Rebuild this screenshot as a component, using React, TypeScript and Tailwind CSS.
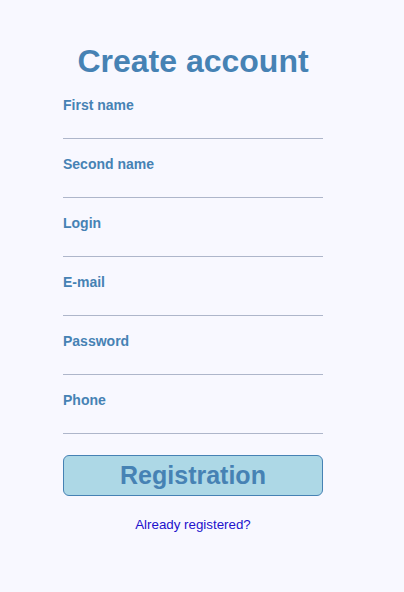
const fields = ["First name", "Second name", "Login", "E-mail", "Password", "Phone"];

export default function App() {
  return (
    <div className="min-h-[592px] bg-[#f8f8ff] font-['Liberation_Sans',Arial,sans-serif]">
      <div className="w-[386px] flex justify-center">
        <form className="w-[260px] pt-[43px] flex flex-col" onSubmit={(e) => e.preventDefault()}>
          <h1 className="text-[32px] leading-[37px] font-bold text-[#4682b4] text-center mb-[17px]">
            Create account
          </h1>
          {fields.map((f) => (
            <label key={f} className="flex flex-col mb-[17px]">
              <span className="text-sm leading-4 font-bold text-[#4682b4]">{f}</span>
              <input
                type="text"
                className="h-[26px] bg-transparent border-b border-[#aeb6ca] outline-none text-sm"
              />
            </label>
          ))}
          <button
            type="submit"
            className="mt-[4px] h-[41px] rounded-md border border-[#4682b4] bg-[#add8e6] text-[#4682b4] text-[25px] font-bold leading-none"
          >
            Registration
          </button>
          <a href="#" className="mt-[21px] text-center text-[13.33px] leading-[15px] text-[#2211cc]">
            Already registered?
          </a>
        </form>
      </div>
    </div>
  );
}
